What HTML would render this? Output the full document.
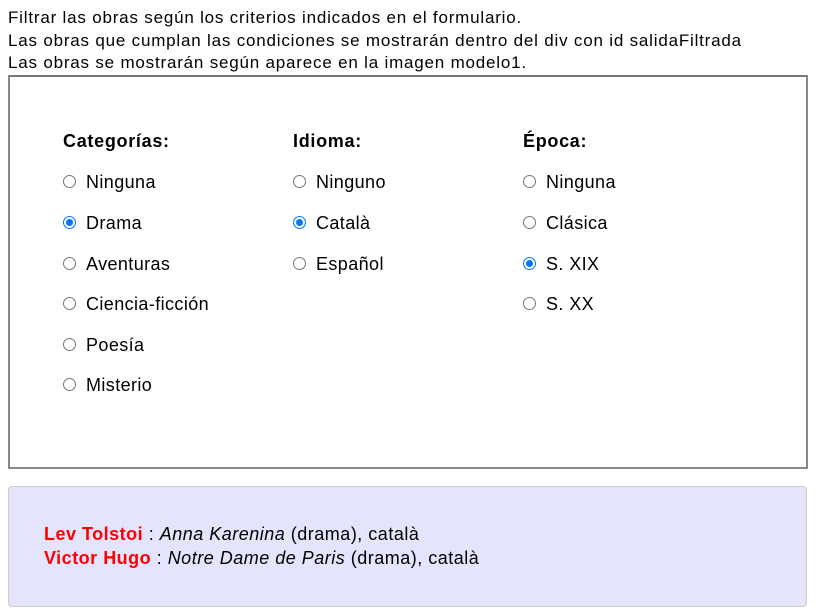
<!DOCTYPE html>
<html><head><meta charset="utf-8"><style>
body{margin:0;width:816px;height:614px;font-family:"Liberation Sans",Arial,sans-serif;font-size:17px;color:#000;position:relative;background:#fff}
.t{position:absolute;left:8px;line-height:22px;letter-spacing:0.8px;white-space:nowrap}
#form{position:absolute;left:8px;top:75px;width:796px;height:390px;border:2px solid #888;border-top-color:#777}
.col{position:absolute;top:0}
h3{position:absolute;margin:0;font-size:18px;font-weight:bold;top:54px;left:0;white-space:nowrap;letter-spacing:0.7px}
.it{position:absolute;left:0;white-space:nowrap;height:22px;line-height:22px;font-size:18px;letter-spacing:0.4px}
.r{display:inline-block;width:11px;height:11px;border:1px solid #767676;border-radius:50%;vertical-align:middle;margin-right:10px;position:relative;top:-2px;box-sizing:content-box}
.r.on{border-color:#0075ff;}
.r.on::after{content:"";position:absolute;left:2px;top:2px;width:7px;height:7px;border-radius:50%;background:#0075ff}
#out{position:absolute;left:8px;top:486px;width:797px;height:119px;background:#e4e4fc;border:1px solid #ccc;border-radius:4px}
.o{position:absolute;left:35px;font-size:18px;line-height:24px;white-space:nowrap;letter-spacing:0.5px}
.a{color:#f00;font-weight:bold}
</style></head><body>
<div class="t" style="top:7px">Filtrar las obras según los criterios indicados en el formulario.</div>
<div class="t" style="top:30px">Las obras que cumplan las condiciones se mostrarán dentro del div con id salidaFiltrada</div>
<div class="t" style="top:52px">Las obras se mostrarán según aparece en la imagen modelo1.</div>
<div id="form">
 <div class="col" style="left:53px">
  <h3>Categorías:</h3>
  <div class="it" style="top:94px"><span class="r"></span>Ninguna</div>
  <div class="it" style="top:135px"><span class="r on"></span>Drama</div>
  <div class="it" style="top:176px"><span class="r"></span>Aventuras</div>
  <div class="it" style="top:216px"><span class="r"></span>Ciencia-ficción</div>
  <div class="it" style="top:257px"><span class="r"></span>Poesía</div>
  <div class="it" style="top:297px"><span class="r"></span>Misterio</div>
 </div>
 <div class="col" style="left:283px">
  <h3>Idioma:</h3>
  <div class="it" style="top:94px"><span class="r"></span>Ninguno</div>
  <div class="it" style="top:135px"><span class="r on"></span>Català</div>
  <div class="it" style="top:176px"><span class="r"></span>Español</div>
 </div>
 <div class="col" style="left:513px">
  <h3>Época:</h3>
  <div class="it" style="top:94px"><span class="r"></span>Ninguna</div>
  <div class="it" style="top:135px"><span class="r"></span>Clásica</div>
  <div class="it" style="top:176px"><span class="r on"></span>S. XIX</div>
  <div class="it" style="top:216px"><span class="r"></span>S. XX</div>
 </div>
</div>
<div id="out">
 <div class="o" style="top:35px"><span class="a">Lev Tolstoi</span> : <i>Anna Karenina</i> (drama), català</div>
 <div class="o" style="top:59px"><span class="a">Victor Hugo</span> : <i>Notre Dame de Paris</i> (drama), català</div>
</div>
</body></html>
